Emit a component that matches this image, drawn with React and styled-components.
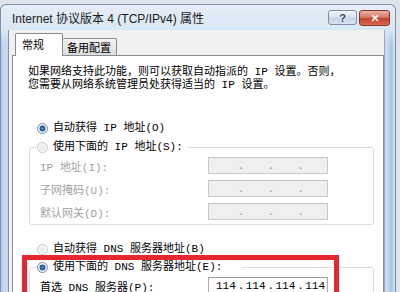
import React from "react";
import styled, { createGlobalStyle } from "styled-components";
import { X } from "lucide-react";

const GlobalStyle = createGlobalStyle`
  html, body { margin: 0; padding: 0; background: #dfe4ea; }
  #root { width: 400px; height: 292px; overflow: hidden; }
`;

const SIMSUN = `"Liberation Mono", "Noto Sans CJK SC", monospace`;
const UI = `"Liberation Sans", "Noto Sans CJK SC", sans-serif`;

const Screen = styled.div`
  width: 400px;
  height: 292px;
  box-sizing: border-box;
  padding: 4px 4px 0 0;
  display: flex;
  overflow: hidden;
  background: #dfe4ea;
`;

const Window = styled.div`
  flex: 1;
  display: flex;
  flex-direction: column;
  border: 1px solid #7d90a8;
  border-bottom: none;
  border-radius: 6px 6px 0 0;
  background:
    linear-gradient(180deg, #e6eef7 0, #d9e6f4 25px, rgba(200, 218, 240, 0) 40px),
    linear-gradient(90deg, #b2cae6 0, #c6d9ef 3px, #c8dbf0 calc(100% - 7px), #a8c2e2 calc(100% - 4px), #d3e2f3 100%);
`;

const TitleBar = styled.div`
  height: 25px;
  display: flex;
  align-items: center;
  padding-left: 11px;
`;

const Title = styled.div`
  flex: 1;
  font-family: ${UI};
  font-size: 12px;
  color: #1b1b1b;
  white-space: nowrap;
`;

const Controls = styled.div`
  align-self: flex-start;
  display: flex;
  gap: 2px;
  margin: 5px 5px 0 0;
`;

const CaptionButton = styled.div`
  box-sizing: border-box;
  width: ${(p) => p.$w}px;
  height: ${(p) => p.$h}px;
  border-radius: 3px;
  display: flex;
  align-items: center;
  justify-content: center;
  font-family: ${UI};
  font-weight: bold;
  font-size: 11px;
  border: 1px solid ${(p) => (p.$danger ? "#83372b" : "#7f8fa5")};
  color: ${(p) => (p.$danger ? "#fff" : "#33455c")};
  background: ${(p) =>
    p.$danger
      ? "linear-gradient(180deg, #eab0a3 0, #d77a66 45%, #c3432e 55%, #d8684f 100%)"
      : "linear-gradient(180deg, #f1f5fa 0, #d9e3ef 45%, #c5d4e7 55%, #d8e4f2 100%)"};
  text-shadow: ${(p) => (p.$danger ? "none" : "0 0 2px #fff")};
`;

const Body = styled.div`
  flex: 1;
  display: flex;
  padding: 0 10px 0 7px;
  min-height: 0;
`;

const Client = styled.div`
  flex: 1;
  display: flex;
  flex-direction: column;
  background: #f0f0f0;
  border-left: 1px solid #7f92aa;
  border-right: 1px solid #9aabbf;
  padding: 3px 0 0 3px;
`;

const TabStrip = styled.div`
  display: flex;
  align-items: flex-end;
  height: 22px;
  padding-left: 3px;
`;

const Tab = styled.div`
  box-sizing: border-box;
  position: relative;
  z-index: 1;
  width: ${(p) => p.$w}px;
  height: ${(p) => (p.$active ? 23 : 17)}px;
  margin-bottom: ${(p) => (p.$active ? -1 : 0)}px;
  padding: ${(p) => (p.$active ? "3px 0 0 6px" : "1px 0 0 4px")};
  border: 1px solid #898c95;
  border-bottom: none;
  border-left-width: ${(p) => (p.$active ? 1 : 0)}px;
  border-radius: 2px 2px 0 0;
  background: ${(p) =>
    p.$active ? "#ffffff" : "linear-gradient(180deg, #f4f4f4 0, #e6e6e6 50%, #dcdcdc 100%)"};
  font-family: "Noto Sans CJK SC", sans-serif;
  font-size: 11px;
  line-height: 15px;
  color: #000;
  white-space: nowrap;
`;

const Panel = styled.div`
  flex: 1;
  position: relative;
  display: flex;
  flex-direction: column;
  background: #fff;
  border: 1px solid #898c95;
  border-bottom: none;
  font-family: ${SIMSUN};
  font-size: 11px;
  color: #000;
`;

const Intro = styled.p`
  margin: 10px 0 0 15px;
  line-height: 13px;
  white-space: nowrap;
`;

const RadioRow = styled.label`
  display: flex;
  align-items: center;
  gap: 5px;
  height: 13px;
  margin: ${(p) => p.$mt || 0}px 0 0 ${(p) => p.$ml || 0}px;
  white-space: nowrap;
  line-height: 13px;
`;

const RadioDot = styled.span`
  flex: none;
  box-sizing: border-box;
  width: 11px;
  height: 11px;
  border-radius: 50%;
  border: 1px solid ${(p) => (p.$checked ? "#7b8ea3" : "#c4c8cc")};
  background: ${(p) =>
    p.$checked
      ? "radial-gradient(circle, #6fa4dc 0, #2a5e9e 1.6px, #1d4c88 2.6px, #c9dcef 3.2px, #f6f9fc 4.5px)"
      : "radial-gradient(circle, #e4e6e8 0, #edeef0 2.5px, #fafafa 4.5px)"};
`;

const Group = styled.fieldset`
  margin: ${(p) => p.$mt}px 9px 0 16px;
  padding: 0;
  min-width: 0;
  border: 1px solid #d5dfe5;
  border-radius: 3px;
`;

const Legend = styled.legend`
  margin-left: 6px;
  padding: 0 ${(p) => p.$trail || 2}px 0 1px;
`;

const Rows = styled.div`
  display: flex;
  flex-direction: column;
  gap: 6px;
  padding: 3px 0 4px 10px;
`;

const FieldRow = styled.div`
  display: flex;
  align-items: center;
  height: 17px;
`;

const FieldLabel = styled.span`
  width: 168px;
  flex: none;
  white-space: nowrap;
  color: ${(p) => (p.$disabled ? "#a2a2a2" : "#000")};
`;

const IpBox = styled.div`
  box-sizing: border-box;
  width: 120px;
  height: 17px;
  display: flex;
  align-items: center;
  padding-left: 5px;
  border: 1px solid ${(p) => (p.$disabled ? "#c9cbce" : "#abadb3")};
  border-top-color: ${(p) => (p.$disabled ? "#bfc1c4" : "#9a9ca3")};
  background: ${(p) => (p.$disabled ? "#efefef" : "#fff")};
  color: ${(p) => (p.$disabled ? "#a2a2a2" : "#000")};
`;

const Octet = styled.span`
  width: 24px;
  text-align: center;
`;

const Dot = styled.span`
  width: 6px;
  text-align: center;
`;

const Highlight = styled.div`
  position: absolute;
  left: 9px;
  top: 199px;
  width: 317px;
  height: 80px;
  box-sizing: border-box;
  border: 5px solid #e5272f;
  pointer-events: none;
`;

function IpField({ label, disabled, value }) {
  const parts = value || ["", "", "", ""];
  return (
    <FieldRow>
      <FieldLabel $disabled={disabled}>{label}</FieldLabel>
      <IpBox $disabled={disabled}>
        {parts.map((v, i) => (
          <React.Fragment key={i}>
            <Octet>{v}</Octet>
            {i < 3 && <Dot>.</Dot>}
          </React.Fragment>
        ))}
      </IpBox>
    </FieldRow>
  );
}

function Radio({ checked, children, ...rest }) {
  return (
    <RadioRow {...rest}>
      <RadioDot $checked={checked} />
      <span>{children}</span>
    </RadioRow>
  );
}

export default function App() {
  return (
    <>
      <GlobalStyle />
      <Screen>
        <Window>
          <TitleBar>
            <Title>Internet 协议版本 4 (TCP/IPv4) 属性</Title>
            <Controls>
              <CaptionButton $w={29} $h={15}>?</CaptionButton>
              <CaptionButton $w={31} $h={16} $danger>
                <X size={10} strokeWidth={3.5} />
              </CaptionButton>
            </Controls>
          </TitleBar>
          <Body>
            <Client>
              <TabStrip>
                <Tab $active $w={48}>常规</Tab>
                <Tab $w={54}>备用配置</Tab>
              </TabStrip>
              <Panel>
                <Intro>
                  如果网络支持此功能，则可以获取自动指派的 IP 设置。否则，
                  <br />
                  您需要从网络系统管理员处获得适当的 IP 设置。
                </Intro>
                <Radio checked $mt={30} $ml={24}>自动获得 IP 地址(O)</Radio>
                <Group $mt={6}>
                  <Legend $trail={4}>
                    <Radio>使用下面的 IP 地址(S):</Radio>
                  </Legend>
                  <Rows>
                    <IpField disabled label="IP 地址(I):" />
                    <IpField disabled label="子网掩码(U):" />
                    <IpField disabled label="默认网关(D):" />
                  </Rows>
                </Group>
                <Radio $mt={18} $ml={24}>自动获得 DNS 服务器地址(B)</Radio>
                <Group $mt={5}>
                  <Legend $trail={20}>
                    <Radio checked>使用下面的 DNS 服务器地址(E):</Radio>
                  </Legend>
                  <Rows>
                    <IpField label="首选 DNS 服务器(P):" value={["114", "114", "114", "114"]} />
                    <IpField label="备用 DNS 服务器(A):" />
                  </Rows>
                </Group>
                <Highlight />
              </Panel>
            </Client>
          </Body>
        </Window>
      </Screen>
    </>
  );
}
